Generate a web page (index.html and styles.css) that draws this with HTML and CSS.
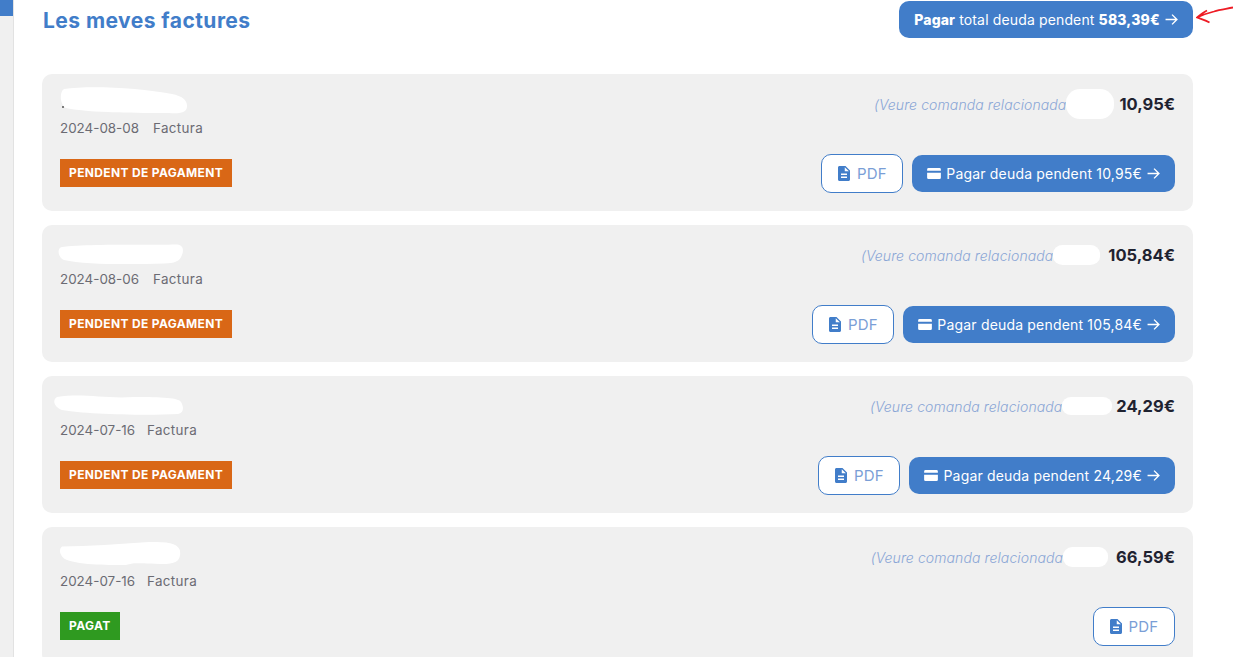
FILE: index.html
```html
<!DOCTYPE html>
<html lang="ca">
	<head>
		<meta charset="utf-8">
		<title>Les meves factures</title>
		<link rel="stylesheet" href="styles.css">
	</head>
	<body>
		<svg width="0" height="0" class="defs">
			<symbol id="i-file" viewBox="4 2 16 20"><path fill-rule="evenodd" d="M14 2H6c-1.1 0-2 .9-2 2v16c0 1.1.9 2 2 2h12c1.1 0 2-.9 2-2V8l-6-6zm2 16H8v-2h8v2zm0-4H8v-2h8v2zm-3-5V3.5L18.5 9H13z"/></symbol>
			<symbol id="i-card" viewBox="2 4 20 16"><path d="M2 6a2 2 0 0 1 2-2h16a2 2 0 0 1 2 2v2H2zM2 11h20v7a2 2 0 0 1-2 2H4a2 2 0 0 1-2-2z"/></symbol>
			<symbol id="i-arrow" viewBox="0 0 12 12"><path d="M.5 6h10.500M6.500 1.500 11 6l-4.500 4.500" fill="none" stroke="currentColor" stroke-width="1.300"/></symbol>
		</svg>
		<aside class="rail"><div class="rail-tab"></div></aside>
		<main class="content">
			<header class="top">
				<h1>Les meves factures</h1>
				<a class="btn btn-pay btn-total"><span><b>Pagar</b> total deuda pendent <b>583,39€</b></span><svg class="ico-arrow"><use href="#i-arrow"/></svg></a>
				<svg class="red-arrow" viewBox="0 0 37 24"><path d="M37 1.500C30 3 24 3.500 18 5.500 12 7 6 9 1 11.500 5 13 9 14 13.500 16.500M1 11.500C4 9 7 6.500 11 4.500" fill="none" stroke="#ee1c25" stroke-width="1.800"/></svg>
			</header>

			<article class="card">
				<svg class="blob blob-1" viewBox="0 0 128 28" preserveAspectRatio="none"><path d="M4 3C30-1 80 2 112 8c10 2 15 6 15 12s-5 8-18 7C80 27 30 27 6 22 0 19-1 6 4 3z"/><circle class="blob-dot" cx="3" cy="21" r="1"/></svg>
				<div class="card-top">
					<div class="card-info">
						<div class="name-line"></div>
						<div class="meta"><span>2024-08-08</span><span class="doc-type">Factura</span></div>
					</div>
					<div class="card-ref">
						<a class="ref-link">(Veure comanda relacionada</a>
						<svg class="ref-blob ref-blob-1" viewBox="0 0 48 30" preserveAspectRatio="none"><rect width="48" height="30" rx="14"/></svg>
						<strong class="amount">10,95€</strong>
					</div>
				</div>
				<div class="card-bottom">
					<span class="badge badge-due">PENDENT DE PAGAMENT</span>
					<div class="actions">
						<a class="btn btn-pdf"><svg class="ico-file"><use href="#i-file"/></svg>PDF</a>
						<a class="btn btn-pay"><svg class="ico-card"><use href="#i-card"/></svg>Pagar deuda pendent 10,95€<svg class="ico-arrow"><use href="#i-arrow"/></svg></a>
					</div>
				</div>
			</article>

			<article class="card">
				<svg class="blob blob-2" viewBox="0 0 128 28" preserveAspectRatio="none"><path d="M3 6C30 2 90 4 120 3c7 0 8 6 6 12-2 8-8 10-18 10-30 1-80 2-102-4C0 18-1 8 3 6z"/></svg>
				<div class="card-top">
					<div class="card-info">
						<div class="name-line"></div>
						<div class="meta"><span>2024-08-06</span><span class="doc-type">Factura</span></div>
					</div>
					<div class="card-ref">
						<a class="ref-link">(Veure comanda relacionada</a>
						<svg class="ref-blob ref-blob-2" viewBox="0 0 48 24" preserveAspectRatio="none"><rect width="48" height="24" rx="10"/></svg>
						<strong class="amount">105,84€</strong>
					</div>
				</div>
				<div class="card-bottom">
					<span class="badge badge-due">PENDENT DE PAGAMENT</span>
					<div class="actions">
						<a class="btn btn-pdf"><svg class="ico-file"><use href="#i-file"/></svg>PDF</a>
						<a class="btn btn-pay"><svg class="ico-card"><use href="#i-card"/></svg>Pagar deuda pendent 105,84€<svg class="ico-arrow"><use href="#i-arrow"/></svg></a>
					</div>
				</div>
			</article>

			<article class="card">
				<svg class="blob blob-3" viewBox="0 0 130 22" preserveAspectRatio="none"><path d="M3 4C30 0 50 6 80 4c20 0 44 0 47 5 3 5 3 11-3 12C90 23 30 21 8 17 0 14-2 7 3 4z"/></svg>
				<div class="card-top">
					<div class="card-info">
						<div class="name-line"></div>
						<div class="meta meta-short"><span>2024-07-16</span><span class="doc-type">Factura</span></div>
					</div>
					<div class="card-ref">
						<a class="ref-link">(Veure comanda relacionada</a>
						<svg class="ref-blob ref-blob-3" viewBox="0 0 48 20" preserveAspectRatio="none"><rect width="48" height="20" rx="9"/></svg>
						<strong class="amount">24,29€</strong>
					</div>
				</div>
				<div class="card-bottom">
					<span class="badge badge-due">PENDENT DE PAGAMENT</span>
					<div class="actions">
						<a class="btn btn-pdf"><svg class="ico-file"><use href="#i-file"/></svg>PDF</a>
						<a class="btn btn-pay"><svg class="ico-card"><use href="#i-card"/></svg>Pagar deuda pendent 24,29€<svg class="ico-arrow"><use href="#i-arrow"/></svg></a>
					</div>
				</div>
			</article>

			<article class="card">
				<svg class="blob blob-4" viewBox="0 0 122 22" preserveAspectRatio="none"><path d="M3 5C30 5 60 3 90 1c20-1 30 2 31 8 1 7-2 12-14 12-30 0-30-2-40 1-20 0-50 0-62-6C0 12 0 7 3 5z"/></svg>
				<div class="card-top">
					<div class="card-info">
						<div class="name-line"></div>
						<div class="meta meta-short"><span>2024-07-16</span><span class="doc-type">Factura</span></div>
					</div>
					<div class="card-ref">
						<a class="ref-link">(Veure comanda relacionada</a>
						<svg class="ref-blob ref-blob-4" viewBox="0 0 44 20" preserveAspectRatio="none"><rect width="44" height="20" rx="9"/></svg>
						<strong class="amount">66,59€</strong>
					</div>
				</div>
				<div class="card-bottom">
					<span class="badge badge-paid">PAGAT</span>
					<div class="actions">
						<a class="btn btn-pdf"><svg class="ico-file"><use href="#i-file"/></svg>PDF</a>
					</div>
				</div>
			</article>
		</main>
	</body>
</html>
```

FILE: styles.css
```css
* {
	box-sizing: border-box;
}
html,
body {
	margin: 0;
	height: 657px;
	overflow: hidden;
	background: #fff;
	color: #1f2230;
	font-family: "Inter", "Open Sans", sans-serif;
	font-size: 13.4px;
}
body {
	display: flex;
}
.defs {
	position: absolute;
}
.rail {
	width: 14px;
	flex-shrink: 0;
	background: #f0f0f0;
	border-right: 1px solid #e2e2e2;
}
.rail-tab {
	height: 16px;
	background: #417dc9;
}
.content {
	flex: 1;
	padding: 0 40px 0 28px;
	position: relative;
}
.top {
	display: flex;
	justify-content: space-between;
	align-items: flex-start;
	height: 74px;
	padding-top: 1px;
}
h1 {
	margin: 6px 0 0 1px;
	color: #417dc9;
	font-size: 21px;
	letter-spacing: 0.45px;
	line-height: 28px;
	font-weight: 700;
}
.btn {
	display: flex;
	align-items: center;
	justify-content: center;
	border-radius: 10px;
	white-space: nowrap;
}
.btn-pay {
	height: 37px;
	padding: 0 15px;
	gap: 5px;
	background: #417dc9;
	color: #fff;
	font-size: 14px;
	letter-spacing: 0.18px;
}
.btn-total {
	width: 294px;
	letter-spacing: 0.14px;
}
.btn-total b {
	font-weight: 800;
}
.btn-pdf {
	width: 82px;
	height: 39px;
	gap: 7px;
	background: #fff;
	border: 1px solid #417dc9;
	color: #7a9ed6;
	font-size: 15px;
	letter-spacing: 0.2px;
}
.ico-arrow {
	width: 13px;
	height: 13px;
}
.ico-file {
	width: 12px;
	height: 15px;
	fill: #417dc9;
}
.ico-card {
	width: 14px;
	height: 11px;
	fill: #fff;
}
.red-arrow {
	position: absolute;
	top: 6px;
	right: 0;
	width: 37px;
	height: 24px;
}
.card {
	position: relative;
	height: 137px;
	margin-bottom: 14px;
	padding: 13px 18px 18px;
	background: #f0f0f0;
	border-radius: 10px;
}
.card-top {
	display: flex;
	justify-content: space-between;
	height: 50px;
	margin-bottom: 17px;
}
.name-line {
	height: 32px;
}
.meta {
	display: flex;
	gap: 14px;
	height: 18px;
	line-height: 18px;
	color: #6b6b73;
}
.meta-short {
	gap: 12px;
}
.doc-type {
	letter-spacing: 0.35px;
}
.card-ref {
	display: flex;
	align-items: center;
	height: 34px;
}
.ref-link {
	color: #8aa6d6;
	font-style: italic;
	font-weight: 300;
	font-size: 14px;
	letter-spacing: 0.1px;
}
.ref-blob {
	fill: #fff;
	flex-shrink: 0;
}
.ref-blob-1 {
	width: 48px;
	height: 30px;
	margin-right: 5px;
}
.ref-blob-2 {
	width: 47px;
	height: 20px;
	margin-right: 8px;
}
.ref-blob-3 {
	width: 50px;
	height: 18px;
	margin-right: 4px;
}
.ref-blob-4 {
	width: 45px;
	height: 20px;
	margin-right: 8px;
}
.amount {
	font-size: 16.5px;
	font-weight: 700;
}
.card-bottom {
	display: flex;
	justify-content: space-between;
	align-items: center;
}
.badge {
	display: block;
	height: 28px;
	margin-bottom: 2px;
	padding: 0 9px;
	line-height: 28px;
	color: #fff;
	font-size: 12px;
	letter-spacing: 0.35px;
	font-weight: 700;
}
.badge-due {
	background: #d96716;
}
.badge-paid {
	background: #2f9a20;
}
.actions {
	display: flex;
	align-items: center;
	gap: 9px;
}
.blob {
	position: absolute;
	fill: #fff;
}
.blob-dot {
	fill: #555;
}
.blob-1 {
	left: 18px;
	top: 12px;
	width: 128px;
	height: 28px;
}
.blob-2 {
	left: 16px;
	top: 17px;
	width: 126px;
	height: 24px;
}
.blob-3 {
	left: 12px;
	top: 17px;
	width: 130px;
	height: 22px;
}
.blob-4 {
	left: 17px;
	top: 14px;
	width: 122px;
	height: 24px;
}
```
